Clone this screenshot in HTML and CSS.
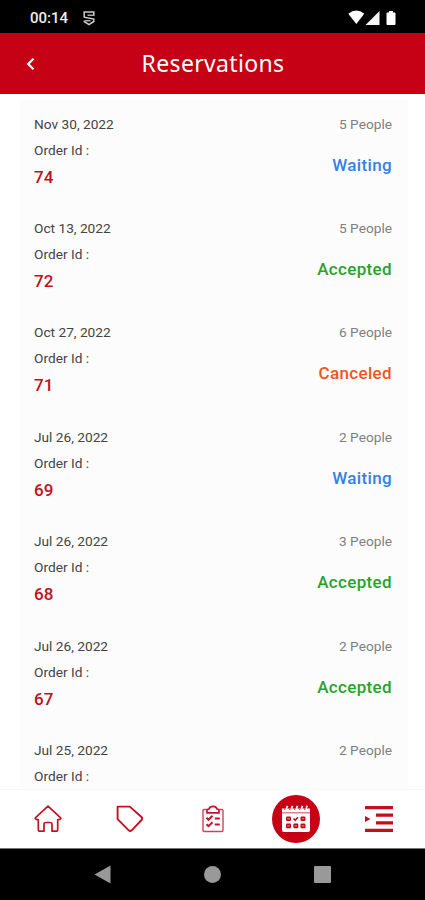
FILE: index.html
```html
<!DOCTYPE html>
<html lang="en">
<head>
  <meta charset="utf-8">
  <meta name="viewport" content="width=device-width, initial-scale=1">
  <title>Reservations</title>
  <link rel="stylesheet" href="styles.css">
</head>
<body>

  <div class="status-bar">
    <span class="clock">00:14</span>
    <svg class="app-icon" width="12" height="15" viewBox="0 0 12 15">
      <path d="M10.800 5V1H1.200v5.200L10.800 8v2.500L6 13.600 1.200 10.500V9.800" fill="none" stroke="#ccc" stroke-width="1.500"/>
      <path d="M10.500 4.200h-6M1.500 9.800h6" fill="none" stroke="#aaa" stroke-width="1.500"/>
    </svg>
    <svg class="signals" width="49" height="16" viewBox="0 0 49 16">
      <path d="M.3 3.700Q8.300-2.700 16.300 3.700L8.300 14z" fill="#fff"/>
      <path d="M31.500 1v14h-14z" fill="#f4f4f4"/>
      <path d="M41 1h4v1.500h1.500q1 0 1 1V14q0 1-1 1h-7q-1 0-1-1V3.500q0-1 1-1H41z" fill="#fff"/>
    </svg>
  </div>

  <div class="header">
    <svg class="back" width="10" height="14" viewBox="0 0 10 14">
      <path d="M7.500 1.700 2.200 7l5.300 5.300" fill="none" stroke="#fff" stroke-width="2.200"/>
    </svg>
    <h1>Reservations</h1>
  </div>

  <div class="content">
    <div class="list">
      <div class="item">
        <div class="info">
          <span class="date">Nov 30, 2022</span>
          <span class="label">Order Id :</span>
          <span class="number">74</span>
        </div>
        <div class="state">
          <span class="people">5 People</span>
          <span class="status waiting">Waiting</span>
        </div>
      </div>
      <div class="item">
        <div class="info">
          <span class="date">Oct 13, 2022</span>
          <span class="label">Order Id :</span>
          <span class="number">72</span>
        </div>
        <div class="state">
          <span class="people">5 People</span>
          <span class="status accepted">Accepted</span>
        </div>
      </div>
      <div class="item">
        <div class="info">
          <span class="date">Oct 27, 2022</span>
          <span class="label">Order Id :</span>
          <span class="number">71</span>
        </div>
        <div class="state">
          <span class="people">6 People</span>
          <span class="status canceled">Canceled</span>
        </div>
      </div>
      <div class="item">
        <div class="info">
          <span class="date">Jul 26, 2022</span>
          <span class="label">Order Id :</span>
          <span class="number">69</span>
        </div>
        <div class="state">
          <span class="people">2 People</span>
          <span class="status waiting">Waiting</span>
        </div>
      </div>
      <div class="item">
        <div class="info">
          <span class="date">Jul 26, 2022</span>
          <span class="label">Order Id :</span>
          <span class="number">68</span>
        </div>
        <div class="state">
          <span class="people">3 People</span>
          <span class="status accepted">Accepted</span>
        </div>
      </div>
      <div class="item">
        <div class="info">
          <span class="date">Jul 26, 2022</span>
          <span class="label">Order Id :</span>
          <span class="number">67</span>
        </div>
        <div class="state">
          <span class="people">2 People</span>
          <span class="status accepted">Accepted</span>
        </div>
      </div>
      <div class="item">
        <div class="info">
          <span class="date">Jul 25, 2022</span>
          <span class="label">Order Id :</span>
        </div>
        <div class="state">
          <span class="people">2 People</span>
          <span class="status accepted">Accepted</span>
        </div>
      </div>
    </div>
  </div>

  <div class="tabs">
    <div class="tab">
      <svg width="28" height="28" viewBox="0 0 28 28">
        <path d="M14 1.200 1.600 12.600q-.8 1 .3 1.500l2.400.8v9.600q0 1.700 1.700 1.700h4V19.500q0-2 2-2h4q2 0 2 2v6.700h4q1.700 0 1.700-1.700v-9.600l2.400-.8q1.100-.5.3-1.500z" fill="none" stroke="#c41223" stroke-width="1.700" stroke-linejoin="round"/>
      </svg>
    </div>
    <div class="tab">
      <svg width="28" height="28" viewBox="0 0 28 28">
        <path d="M1.600 1.600h12.200L25.500 12q1.400 1.500 0 3l-9.800 10.300q-1.500 1.300-3 0L1.600 14.200z" fill="none" stroke="#c41223" stroke-width="1.900" stroke-linejoin="round"/>
      </svg>
    </div>
    <div class="tab">
      <svg width="22" height="28" viewBox="0 0 22 28">
        <rect x="1" y="4.500" width="20" height="22" rx="1" fill="none" stroke="#cf4358" stroke-width="1.400"/>
        <path d="M5 7.800V5.500Q5 4.200 7 4q1-2.700 4-2.700T15 4q2 .2 2 1.500v2.300z" fill="#fff" stroke="#c41233" stroke-width="1.700"/>
        <path d="M4.500 12.800l2 2 4-4M4.500 19.200l2 2 4-4" fill="none" stroke="#c41233" stroke-width="2"/>
        <path d="M12.800 13.500h5M12.800 19.500h5" stroke="#c41233" stroke-width="1.900"/>
      </svg>
    </div>
    <div class="tab active">
      <svg width="28" height="28" viewBox="0 0 28 28">
        <path d="M0 3.500h28v4H0z" fill="#fff"/>
        <path d="M0 8.300h28V25q0 2-2 2H2q-2 0-2-2z" fill="#fff"/>
        <path d="M3.500 5 5.500.8M8.500 5l2-4.200M13.500 5l2-4.200M18.500 5l2-4.200M23.500 5l1.500-4.200" stroke="#fff" stroke-width="1.900"/>
        <path d="M2.500 5 4 1.500M7.500 5 9 1.500M12.500 5 14 1.500M17.500 5 19 1.500M22.500 5 24 1.500" stroke="#c60015" stroke-width=".8"/>
        <g fill="#c60015">
          <rect x="4" y="11.500" width="5" height="4.600" rx="1.300"/>
          <rect x="18.500" y="11.500" width="5" height="4.600" rx="1.300"/>
          <rect x="4" y="18.500" width="5" height="4.800" rx="1.300"/>
          <rect x="11.300" y="18.500" width="5" height="4.800" rx="1.300"/>
          <rect x="18.500" y="18.500" width="5" height="4.800" rx="1.300"/>
        </g>
        <path d="M11.500 13.600l1.700 1.500 2.800-2.800" fill="none" stroke="#c60015" stroke-width="1.500"/>
        <path d="M5.200 13.800h2.600M19.700 13.800h2.600M5.200 20.900h2.600M12.500 20.900h2.600M19.700 20.900h2.600" stroke="#fff" stroke-width=".6"/>
      </svg>
    </div>
    <div class="tab">
      <svg width="28" height="28" viewBox="0 0 28 28">
        <path d="M0 2.600h28M11 10.200h17M11 17.800h17M0 25.400h28" stroke="#c01020" stroke-width="3.200"/>
        <path d="M0 11v6l5.500-3z" fill="#c01020"/>
      </svg>
    </div>
  </div>

  <div class="system-bar">
    <svg width="17" height="19" viewBox="0 0 17 19">
      <path d="M16.500.500v18L.500 9.500z" fill="#999"/>
    </svg>
    <svg width="17" height="17" viewBox="0 0 17 17">
      <circle cx="8.500" cy="8.500" r="8.500" fill="#999"/>
    </svg>
    <svg width="17" height="17" viewBox="0 0 17 17">
      <rect width="17" height="17" rx="1" fill="#999"/>
    </svg>
  </div>

</body>
</html>
```
FILE: styles.css
```css
* {
  box-sizing: border-box;
}

body {
  display: flex;
  flex-direction: column;
  height: 900px;
  margin: 0;
  overflow: hidden;
  background: #fff;
  font-family: Roboto, sans-serif;
}

svg {
  display: block;
}

.status-bar {
  display: flex;
  align-items: center;
  height: 33px;
  padding: 3px 28px 0 30px;
  background: #000;
  color: #eee;
}

.clock {
  width: 53px;
  font-size: 15px;
  font-weight: 500;
}

.signals {
  margin-left: auto;
}

.header {
  display: grid;
  grid-template-columns: 60px 1fr 60px;
  align-items: center;
  height: 61px;
  background: #c60015;
  color: #fff;
}

.back {
  margin-left: 26px;
}

h1 {
  margin: 0;
  padding: 0 0 1px 1px;
  text-align: center;
  font-family: "Noto Sans", sans-serif;
  font-size: 23px;
  font-weight: 400;
  letter-spacing: .35px;
}

.content {
  height: 695px;
  padding: 3.6px 14px 4px 20px;
  background: linear-gradient(to right, #fff 20px, #fcfcfc 20px, #fcfcfc 408px, #fff 408px);
  border-top: 6px solid #fff;
}

.list {
  height: 681.4px;
  overflow: hidden;
}

.item {
  display: flex;
  justify-content: space-between;
  height: 104.4px;
  padding: 10px 19px 0 14px;
}

.info,
.state {
  display: flex;
  flex-direction: column;
}

.state {
  align-items: flex-end;
}

.date,
.label,
.people {
  height: 26px;
  line-height: 20px;
  font-size: 13.7px;
  color: #444;
}

.people {
  color: #808080;
}

.number {
  line-height: 22px;
  font-size: 17px;
  font-weight: 500;
  color: #c01020;
}

.status {
  margin-top: 14px;
  line-height: 22px;
  font-size: 17px;
  font-weight: 500;
  letter-spacing: .35px;
}

.waiting {
  color: #3480e8;
}

.accepted {
  color: #27a22d;
}

.canceled {
  color: #ee5520;
}

.tabs {
  display: flex;
  align-items: center;
  justify-content: space-between;
  height: 60px;
  padding: 0 22.5px 0 23.5px;
  border-top: 1px solid #f7f7f7;
  border-bottom: 1px solid #777;
}

.tab {
  display: flex;
  align-items: center;
  justify-content: center;
  width: 48px;
  height: 48px;
}

.active {
  border-radius: 50%;
  background: #c60015;
}

.system-bar {
  display: flex;
  align-items: center;
  justify-content: space-between;
  height: 51px;
  padding: 0 94px;
  background: #000;
}
```
